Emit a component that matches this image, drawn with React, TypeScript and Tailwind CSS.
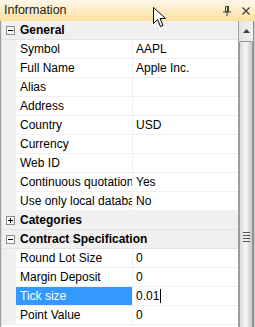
import React from "react";

type Row =
  | { kind: "cat"; title: string; open: boolean }
  | { kind: "prop"; label: string; value?: string; selected?: boolean };

const rows: Row[] = [
  { kind: "cat", title: "General", open: true },
  { kind: "prop", label: "Symbol", value: "AAPL" },
  { kind: "prop", label: "Full Name", value: "Apple Inc." },
  { kind: "prop", label: "Alias" },
  { kind: "prop", label: "Address" },
  { kind: "prop", label: "Country", value: "USD" },
  { kind: "prop", label: "Currency" },
  { kind: "prop", label: "Web ID" },
  { kind: "prop", label: "Continuous quotations", value: "Yes" },
  { kind: "prop", label: "Use only local database", value: "No" },
  { kind: "cat", title: "Categories", open: false },
  { kind: "cat", title: "Contract Specification", open: true },
  { kind: "prop", label: "Round Lot Size", value: "0" },
  { kind: "prop", label: "Margin Deposit", value: "0" },
  { kind: "prop", label: "Tick size", value: "0.01", selected: true },
  { kind: "prop", label: "Point Value", value: "0" },
];

function ExpandBox({ open }: { open: boolean }) {
  return (
    <svg width="9" height="9" viewBox="0 0 9 9" className="shrink-0">
      <rect x="0.5" y="0.5" width="8" height="8" fill="#fafafa" stroke="#8c8c8c" />
      <path d="M2 4.5h5" stroke="#000" />
      {!open && <path d="M4.5 2v5" stroke="#000" />}
    </svg>
  );
}

function CategoryRow({ title, open }: { title: string; open: boolean }) {
  return (
    <div className="flex h-[19px] items-center border-b border-[#e3e3e3] bg-[#f0f0f0]">
      <div className="flex w-[14px] justify-end pr-[1px]">
        <ExpandBox open={open} />
      </div>
      <span className="pl-[4px] font-bold text-black">{title}</span>
    </div>
  );
}

function PropRow({ label, value, selected }: { label: string; value?: string; selected?: boolean }) {
  return (
    <div className="flex h-[19px]">
      <div className="w-[14px] shrink-0 bg-[#f0f0f0]" />
      <div
        className={`flex w-[117px] shrink-0 items-center overflow-hidden whitespace-nowrap border-b border-r border-[#f0f0f0] pl-[4px] ${
          selected ? "bg-[#3399ff] text-white" : "text-black"
        }`}
      >
        {label}
      </div>
      <div className="flex flex-1 items-center border-b border-[#f0f0f0] pl-[3px] text-black">
        {value}
        {selected && <span className="ml-[1px] h-[14px] w-[1px] bg-black" />}
      </div>
    </div>
  );
}

function Scrollbar() {
  return (
    <div className="flex w-[14px] flex-col bg-gradient-to-r from-[#e3e3e3] to-[#f1f1f1]">
      <div className="flex h-[20px] items-center justify-center">
        <svg width="7" height="4" viewBox="0 0 7 4">
          <path d="M3.5 0L7 4H0z" fill="#3d3d3d" />
        </svg>
      </div>
      {/* thumb runs past the bottom edge */}
      <div className="flex flex-1 flex-col items-center rounded-t-[2px] border border-b-0 border-[#989898] bg-gradient-to-r from-[#dadada] via-[#f7f7f7] to-[#c6c6c6]">
        <div className="h-[190px] shrink-0" />
        <div className="flex flex-col gap-[2px]">
          <div className="h-[1px] w-[7px] bg-[#555]" />
          <div className="h-[1px] w-[7px] bg-[#555]" />
          <div className="h-[1px] w-[7px] bg-[#555]" />
          <div className="h-[1px] w-[7px] bg-[#555]" />
        </div>
      </div>
    </div>
  );
}

export default function App() {
  return (
    <div className="relative h-[327px] w-[255px] overflow-hidden bg-white font-['Liberation_Sans',Arial,sans-serif] text-[12px] leading-none">
      {/* Title bar */}
      <div className="flex h-[21px] items-center bg-gradient-to-b from-[#fef8e8] to-[#fbe09c] pl-[4px] pr-[5px]">
        <span className="text-[12.5px] text-[#1b1b1b]">Information</span>
        <div className="ml-auto flex items-center gap-[11px]">
          <svg width="8" height="10" viewBox="0 0 8 10">
            <path d="M2.5 0.5h3v5h-3z" fill="none" stroke="#3c3c3c" />
            <path d="M4.5 1v4" stroke="#3c3c3c" />
            <path d="M0 6h8" stroke="#3c3c3c" />
            <path d="M4 6v4" stroke="#3c3c3c" />
          </svg>
          <svg width="8" height="8" viewBox="0 0 8 8">
            <path d="M0.5 0.5l7 7M7.5 0.5l-7 7" stroke="#3c3c3c" strokeWidth="1.2" />
          </svg>
        </div>
      </div>

      {/* Body */}
      <div className="flex h-[306px]">
        <div className="w-[1px] bg-[#a0a0a0]" />
        <div className="w-[1px] bg-[#dcdcdc]" />
        <div className="flex-1">
          {rows.map((r, i) =>
            r.kind === "cat" ? (
              <CategoryRow key={i} title={r.title} open={r.open} />
            ) : (
              <PropRow key={i} label={r.label} value={r.value} selected={r.selected} />
            )
          )}
        </div>
        <div className="w-[1px] bg-[#a0a0a0]" />
        <Scrollbar />
        <div className="w-[1px] bg-[#8f8f8f]" />
        <div className="w-[1px] bg-[#c9c9c9]" />
      </div>

      {/* Mouse pointer */}
      <svg
        className="absolute left-[153px] top-[7px]"
        width="13"
        height="21"
        viewBox="0 0 13 21"
      >
        <path
          d="M0.5 0.5V16.5L4.5 12.5L7.5 19.5L10 18.5L7 11.5H12.5Z"
          fill="#fff"
          stroke="#000"
        />
      </svg>
    </div>
  );
}
